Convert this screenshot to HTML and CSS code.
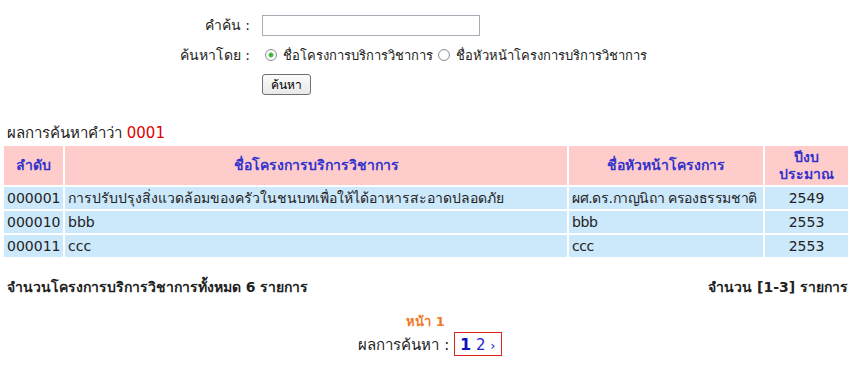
FILE: index.html
```html
<!DOCTYPE html>
<html lang="th">
<head>
  <meta charset="UTF-8">
  <title>ค้นหาโครงการบริการวิชาการ</title>
  <link rel="stylesheet" href="styles.css">
</head>
<body>
  <form class="search-form">
    <label class="label" for="keyword">คำค้น :</label>
    <div class="field"><input type="text" id="keyword" class="keyword"></div>
    <span class="label">ค้นหาโดย :</span>
    <div class="field radios">
      <label><input type="radio" name="by" checked> ชื่อโครงการบริการวิชาการ</label>
      <label><input type="radio" name="by"> ชื่อหัวหน้าโครงการบริการวิชาการ</label>
    </div>
    <span></span>
    <div class="field"><button type="button" class="search-btn">ค้นหา</button></div>
  </form>

  <div class="result-title">ผลการค้นหาคำว่า <span class="keyword-red">0001</span></div>
  <table class="result">
    <thead>
      <tr>
        <th class="col-no">ลำดับ</th>
        <th class="col-name">ชื่อโครงการบริการวิชาการ</th>
        <th class="col-head">ชื่อหัวหน้าโครงการ</th>
        <th class="col-year">ปีงบ<br>ประมาณ</th>
      </tr>
    </thead>
    <tbody>
      <tr>
        <td>000001</td>
        <td>การปรับปรุงสิ่งแวดล้อมของครัวในชนบทเพื่อให้ได้อาหารสะอาดปลอดภัย</td>
        <td class="head-name">ผศ.ดร.กาญนิถา ครองธรรมชาติ</td>
        <td class="year">2549</td>
      </tr>
      <tr>
        <td>000010</td>
        <td>bbb</td>
        <td class="head-name">bbb</td>
        <td class="year">2553</td>
      </tr>
      <tr>
        <td>000011</td>
        <td>ccc</td>
        <td class="head-name">ccc</td>
        <td class="year">2553</td>
      </tr>
    </tbody>
  </table>

  <div class="summary">
    <span>จำนวนโครงการบริการวิชาการทั้งหมด 6 รายการ</span>
    <span>จำนวน [1-3] รายการ</span>
  </div>

  <div class="pager">
    <div class="page-no">หน้า 1</div>
    <div class="page-line">ผลการค้นหา : <span class="pages"><b class="current">1</b> <a href="#">2</a> <a href="#" class="next">&rsaquo;</a></span></div>
  </div>
</body>
</html>
```

FILE: styles.css
```css
body {
  font-family: Tahoma, "DejaVu Sans", "Noto Sans", sans-serif;
  font-size: 14px;
  color: #222;
  background: #ffffff;
  margin: 0;
  padding: 0;
}
.search-form {
  display: grid;
  grid-template-columns: 250px auto;
  column-gap: 12px;
  row-gap: 8px;
  padding-top: 14px;
  align-items: center;
}
.label {
  text-align: right;
}
.keyword {
  width: 218px;
  height: 21px;
  box-sizing: border-box;
  border: 1px solid #a5acb5;
  margin: 0;
}
.radios {
  font-size: 13px;
}
.radios input {
  appearance: none;
  width: 12px;
  height: 12px;
  margin: 0 2px 0 3px;
  border: 1px solid #8c9096;
  border-radius: 50%;
  background: radial-gradient(circle, #ffffff 55%, #e4e6e8 100%);
  vertical-align: -1px;
}
.radios input:checked {
  background: radial-gradient(circle, #2fa83a 0, #4cc24a 2px, #ffffff 3px, #ffffff 55%, #e4e6e8 100%);
}
.radios label + label input {
  margin-left: 1px;
}
.search-btn {
  font-family: inherit;
  font-size: 12px;
  height: 21px;
  width: 49px;
  padding: 0;
  background: linear-gradient(#fbfbfb, #e9e9e9);
  border: 1px solid #707070;
  border-radius: 3px;
}
.result-title {
  margin-top: 26px;
  font-size: 15px;
  padding-left: 7px;
}
.keyword-red {
  color: #e00000;
}
.result {
  width: 848px;
  table-layout: fixed;
  border-collapse: separate;
  border-spacing: 2px;
  margin: -1px 0 0 2px;
}
.result th {
  background: #ffcccc;
  color: #3333cc;
  font-weight: bold;
  height: 39px;
  padding: 0;
  line-height: 17px;
}
.result td {
  background: #cce8fb;
  height: 22px;
  padding: 0 3px;
  white-space: nowrap;
  overflow: hidden;
}
.result td.head-name {
  letter-spacing: -0.4px;
}
.col-no { width: 59px; }
.col-head { width: 194px; }
.col-year { width: 83px; }
.result td.year {
  text-align: center;
}
.summary {
  display: flex;
  justify-content: space-between;
  width: 841px;
  font-weight: bold;
  margin-top: 17px;
  padding-left: 7px;
}
.pager {
  text-align: center;
  margin-top: 13px;
}
.page-no {
  color: #ef7b2a;
  font-weight: bold;
  font-size: 13px;
  padding-right: 8px;
}
.page-line {
  font-size: 15px;
  padding-left: 1px;
}
.pages {
  display: inline-block;
  border: 1px solid #dd2222;
  padding: 2px 5px 1px;
}
.pages a {
  color: #2222cc;
  text-decoration: none;
}
.current {
  color: #1111bb;
  font-size: 16px;
}
.next {
  font-size: 13px;
}
```
